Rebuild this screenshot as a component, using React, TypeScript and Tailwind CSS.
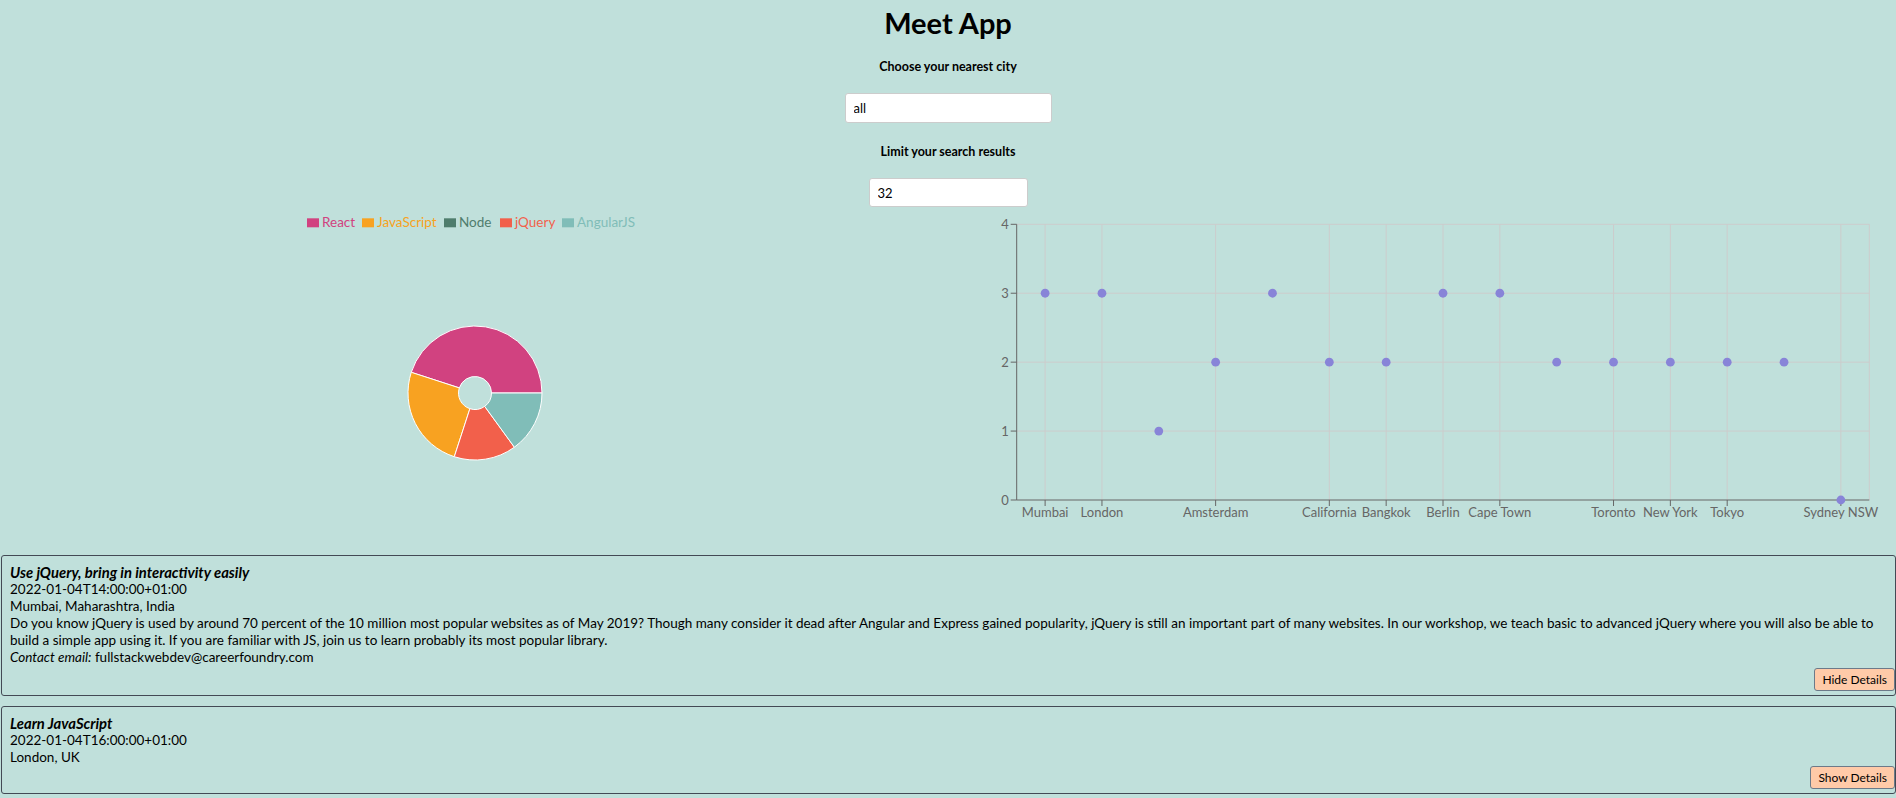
import React from "react";

const slices = [
  { name: "React", value: 9, color: "#d14280" },
  { name: "JavaScript", value: 5, color: "#f8a221" },
  { name: "Node", value: 0, color: "#4f7d6d" },
  { name: "jQuery", value: 3, color: "#f2604b" },
  { name: "AngularJS", value: 3, color: "#80bdb8" },
];

const legendX = [307, 362, 444, 500, 562];

const cities = [
  { city: "Mumbai", count: 3 },
  { city: "London", count: 3 },
  { city: "", count: 1 },
  { city: "Amsterdam", count: 2 },
  { city: "", count: 3 },
  { city: "California", count: 2 },
  { city: "Bangkok", count: 2 },
  { city: "Berlin", count: 3 },
  { city: "Cape Town", count: 3 },
  { city: "", count: 2 },
  { city: "Toronto", count: 2 },
  { city: "New York", count: 2 },
  { city: "Tokyo", count: 2 },
  { city: "", count: 2 },
  { city: "Sydney NSW", count: 0 },
];

function arc(cx: number, cy: number, r: number, ri: number, a0: number, a1: number) {
  const rad = (d: number) => (d * Math.PI) / 180;
  const p = (rr: number, a: number) =>
    `${(cx + rr * Math.cos(rad(a))).toFixed(2)},${(cy - rr * Math.sin(rad(a))).toFixed(2)}`;
  const large = a1 - a0 > 180 ? 1 : 0;
  return `M${p(r, a0)}A${r},${r} 0 ${large} 0 ${p(r, a1)}L${p(ri, a1)}A${ri},${ri} 0 ${large} 1 ${p(ri, a0)}Z`;
}

function PieSection() {
  const total = slices.reduce((s, d) => s + d.value, 0);
  let angle = 0;
  return (
    <svg width={948} height={343} className="shrink-0">
      {slices.map((s, i) => (
        <g key={s.name}>
          <path d="M0,0h12v9h-12z" transform={`translate(${legendX[i]},6.3)`} fill={s.color} />
          <text x={legendX[i] + 15} y={15} fontSize={13.5} fill={s.color}>
            {s.name}
          </text>
        </g>
      ))}
      {slices.map((s) => {
        if (!s.value) return null;
        const a0 = angle;
        const a1 = angle + (s.value / total) * 360;
        angle = a1;
        return <path key={s.name} d={arc(475, 181, 67, 16.5, a0, a1)} fill={s.color} stroke="#fff" strokeWidth={1} />;
      })}
    </svg>
  );
}

function ScatterSection() {
  const left = 68.7;
  const right = 921.3;
  const top = 12.3;
  const bottom = 288;
  const unit = (bottom - top) / 4;
  const band = (right - left) / cities.length;
  const cx = (i: number) => left + band / 2 + i * band;
  const cy = (v: number) => bottom - v * unit;
  return (
    <svg width={948} height={343} className="shrink-0">
      {[1, 2, 3, 4].map((v) => (
        <line key={v} x1={left} x2={right} y1={cy(v)} y2={cy(v)} stroke="#ccc" />
      ))}
      {cities.map((c, i) =>
        c.city ? <line key={i} x1={cx(i)} x2={cx(i)} y1={top} y2={bottom} stroke="#ccc" /> : null
      )}
      <line x1={right} x2={right} y1={top} y2={bottom} stroke="#ccc" />
      <line x1={left} x2={left} y1={top} y2={bottom} stroke="#666" />
      <line x1={left} x2={right} y1={bottom} y2={bottom} stroke="#666" />
      {[0, 1, 2, 3, 4].map((v) => (
        <g key={v}>
          <line x1={left - 6} x2={left} y1={cy(v)} y2={cy(v)} stroke="#666" />
          <text x={left - 8} y={cy(v)} dy="0.355em" textAnchor="end" fontSize={13} fill="#666">
            {v}
          </text>
        </g>
      ))}
      {cities.map((c, i) =>
        c.city ? (
          <g key={i}>
            <line x1={cx(i)} x2={cx(i)} y1={bottom} y2={bottom + 6} stroke="#666" />
            <text x={cx(i)} y={304.5} textAnchor="middle" fontSize={13} fill="#666">
              {c.city}
            </text>
          </g>
        ) : null
      )}
      {cities.map((c, i) => (
        <circle key={i} cx={cx(i)} cy={cy(c.count)} r={4.4} fill="#8884d8" />
      ))}
    </svg>
  );
}

function EventCard({
  title,
  date,
  location,
  description,
  open,
}: {
  title: string;
  date: string;
  location: string;
  description?: string;
  open: boolean;
}) {
  return (
    <div className="ml-px rounded-[3px] border border-[#434a55] pt-2 pb-1 pl-2 leading-[17px] text-[13.5px]">
      <div className="font-bold italic text-[14.8px]">{title}</div>
      <div>{date}</div>
      <div>{location}</div>
      {open && (
        <>
          <div>{description}</div>
          <div>
            <span className="italic">Contact email:</span> fullstackwebdev@careerfoundry.com
          </div>
        </>
      )}
      <div className={`flex justify-end ${open ? "mt-[2px]" : "mt-0"}`}>
        <button
          type="button"
          className="h-[23px] rounded-[3px] border border-[#6c7a89] bg-[#ffcaa8] px-[7px] text-[12px] leading-none text-black"
        >
          {open ? "Hide Details" : "Show Details"}
        </button>
      </div>
    </div>
  );
}

export default function App() {
  return (
    <div className="min-h-screen bg-[#c0e0db] font-['Segoe_UI',Lato,sans-serif] text-black">
      <div className="flex flex-col items-center">
        <h1 className="mt-[3px] text-[29px] leading-[40px] font-bold">Meet App</h1>
        <div className="mt-[15px] text-[12.5px] leading-[18px] font-bold">Choose your nearest city</div>
        <input
          readOnly
          value="all"
          className="mt-[17px] h-[30px] w-[207px] rounded-[3px] border border-[#ccc] bg-white pl-[8px] text-[13px] outline-none"
        />
        <div className="mt-[20px] text-[12.5px] leading-[18px] font-bold">Limit your search results</div>
        <input
          readOnly
          value="32"
          className="mt-[17px] h-[29px] w-[159px] rounded-[3px] border border-[#ccc] bg-white pl-[8px] text-[13px] outline-none"
        />
      </div>
      <div className="mt-[5px] flex h-[343px]">
        <PieSection />
        <ScatterSection />
      </div>
      <div className="flex flex-col gap-[10px] pb-1">
        <EventCard
          open
          title="Use jQuery, bring in interactivity easily"
          date="2022-01-04T14:00:00+01:00"
          location="Mumbai, Maharashtra, India"
          description="Do you know jQuery is used by around 70 percent of the 10 million most popular websites as of May 2019? Though many consider it dead after Angular and Express gained popularity, jQuery is still an important part of many websites. In our workshop, we teach basic to advanced jQuery where you will also be able to build a simple app using it. If you are familiar with JS, join us to learn probably its most popular library."
        />
        <EventCard
          open={false}
          title="Learn JavaScript"
          date="2022-01-04T16:00:00+01:00"
          location="London, UK"
        />
      </div>
    </div>
  );
}
